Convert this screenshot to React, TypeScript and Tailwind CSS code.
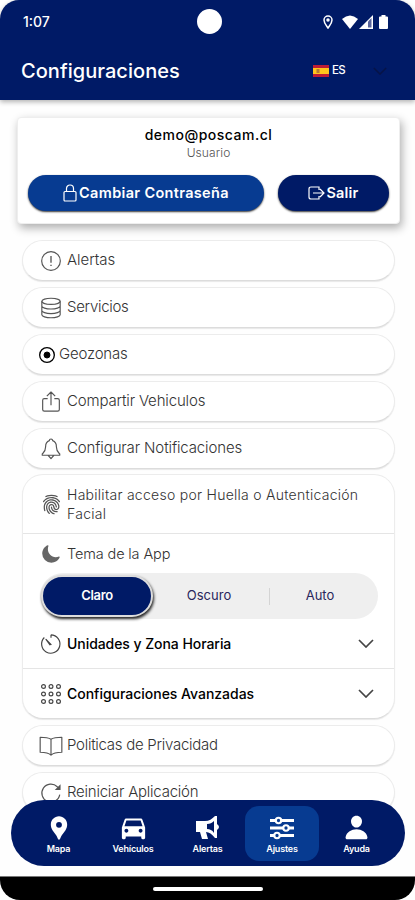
import type { ReactNode } from "react";
import { IoFingerPrint, IoMoon, IoPerson } from "react-icons/io5";
import { MdDirectionsCar, MdLocationPin } from "react-icons/md";

const paths: Record<string, ReactNode> = {
  alert: (
    <>
      <circle cx="12" cy="12" r="11.2" />
      <path d="M12 6v8M12 16.5v1.5" strokeWidth="1.6" />
    </>
  ),
  database: (
    <>
      <ellipse cx="12" cy="4" rx="11" ry="3.7" />
      <path d="M1 4v16c0 2 4.9 3.700 11 3.700s11-1.700 11-3.700V4M1 9.500c0 2 4.900 3.700 11 3.700s11-1.700 11-3.700M1 15c0 2 4.900 3.700 11 3.700s11-1.700 11-3.700" />
    </>
  ),
  target: (
    <>
      <circle cx="12" cy="12" r="11" strokeWidth="2" />
      <circle cx="12" cy="12" r="4.5" fill="currentColor" />
    </>
  ),
  share: <path d="M8 8H4q-2 0-2 2v11q0 2 2 2h16q2 0 2-2V10q0-2-2-2h-4M12 16V0M7 5l5-5 5 5" />,
  bell: <path d="M12 0c-1.500 0-2 1-2 2-3 1-4.500 4-4.500 7.500 0 5-1.500 6-4 8.500v1.500h21V18c-2.500-2.500-4-3.500-4-8.500C18.500 6 17 3 14 2c0-1-.5-2-2-2ZM8.500 19.500 12 23.500l3.500-4" />,
  timer: <path d="M12 1a11 11 0 1 1-8 3.200M12 1v3.500M12.500 13 6 6.500l5 7" />,
  book: <path d="M12 4v19M12 4C9 2 5 1.500-1 1.500v18c6 0 10 .5 13 3.500 3-3 7-3.500 13-3.500v-18C19 1.500 15 2 12 4Z" />,
  reload: (
    <>
      <path d="M22.500 14A10.800 10.800 0 1 1 19.500 4.500l2.500 3" />
      <path d="M23.500 1.500v7h-7Z" fill="currentColor" stroke="none" />
    </>
  ),
  grid: (
    <>
      {[3, 12, 21].map((y) =>
        [3, 12, 21].map((x) => <circle key={`${x}-${y}`} cx={x} cy={y} r="2.3" />)
      )}
    </>
  ),
};

function LineIcon({ name, className = "size-5" }: { name: string; className?: string }) {
  return (
    <svg
      viewBox="0 0 24 24"
      className={`shrink-0 overflow-visible ${className}`}
      fill="none"
      stroke="currentColor"
      strokeWidth="1.4"
      strokeLinejoin="round"
    >
      {paths[name]}
    </svg>
  );
}

function Chevron({ className }: { className: string }) {
  return (
    <svg viewBox="0 0 16 9" className={className} fill="none" stroke="currentColor" strokeWidth="1.7">
      <path d="m1 1 7 7 7-7" />
    </svg>
  );
}

const options = [
  { icon: "alert", label: "Alertas", text: "tracking-[-0.05px]" },
  { icon: "database", label: "Servicios", text: "tracking-[-0.3px]" },
  { icon: "target", label: "Geozonas", text: "tracking-[-0.2px]" },
  { icon: "share", label: "Compartir Vehiculos", text: "tracking-[-0.16px]" },
  { icon: "bell", label: "Configurar Notificaciones", text: "tracking-[-0.12px]" },
];

function Row({ icon, label, text }: { icon: string; label: string; text: string }) {
  const target = icon === "target";
  return (
    <div
      className={`flex h-[41px] shrink-0 items-center rounded-full border border-[#ececec] border-b-[#dcdcdc] bg-white shadow-[0_1px_1px_#e8e8e8] ${
        target ? "gap-[4px] pl-4" : "gap-[6px] pl-[18px]"
      }`}
    >
      <LineIcon name={icon} className={target ? "size-4 text-black" : "size-5 text-[#555]"} />
      <span className={`text-[15px] font-light text-[#333] ${text}`}>{label}</span>
    </div>
  );
}

function StatusBar() {
  return (
    <div className="flex h-[43px] items-center justify-between pl-[23px] pr-[26px]">
      <span className="w-[70px] text-[14px] font-medium">1:07</span>
      <span className="ml-[2px] size-[25px] rounded-full bg-white" />
      <div className="flex w-[66px] items-center">
        <svg viewBox="0 0 10 14" className="h-[14px] w-[10px]" fill="none" stroke="white" strokeWidth="1.5">
          <path d="M5 13C3 10 1 8 1 5a4 4 0 0 1 8 0c0 3-2 5-4 8Z" />
          <circle cx="5" cy="5" r="1" fill="white" />
        </svg>
        <svg viewBox="0 0 16 14" className="ml-[9px] h-[14px] w-4" fill="white">
          <path d="M0 4q8-7 16 0L8 14Z" />
        </svg>
        <svg viewBox="0 0 14 14" className="ml-px h-[14px] w-[14px]">
          <path d="M0 14 14 0v14Z" fill="white" />
          <path d="M9 6.500 12.500 3v9.500H9Z" fill="#5a659b" />
        </svg>
        <svg viewBox="0 0 9 14" className="ml-[6px] h-[14px] w-[9px]" fill="white">
          <path d="M2.500 0h4v1.500H8q1 0 1 1V13q0 1-1 1H1q-1 0-1-1V2.500q0-1 1-1h1.500Z" />
        </svg>
      </div>
    </div>
  );
}

function Header() {
  return (
    <header className="relative z-10 h-[100px] shrink-0 rounded-t-[19px] bg-[#001a66] text-white shadow-[0_2px_5px_rgba(0,0,0,0.3)]">
      <StatusBar />
      <div className="flex h-[56px] items-center pl-[21px]">
        <h1 className="w-[292px] text-[20px] font-medium tracking-[0.05px]">Configuraciones</h1>
        <svg viewBox="0 0 16 12" className="h-3 w-4">
          <path d="M0 0h16v12H0z" fill="#bd1c35" />
          <path d="M0 3h16v6H0z" fill="#ffc51b" />
          <path d="M3.500 4h3v4h-3z" fill="#b77932" />
        </svg>
        <span className="ml-[3px] w-[38px] text-[11.5px] font-medium tracking-[-0.8px]">ES</span>
        <Chevron className="ml-[3px] h-[8px] w-[14px] text-[#061347]" />
      </div>
    </header>
  );
}

function UserCard() {
  return (
    <section className="ml-[17px] mr-[15px] mt-[17px] flex h-[107px] shrink-0 flex-col items-center rounded-[4px] border border-[#eee] bg-white pt-[8px] shadow-[2px_4px_10px_rgba(0,0,0,0.32)]">
      <p className="text-[14px] leading-[18px] font-medium tracking-[0.5px] text-black">demo@poscam.cl</p>
      <p className="text-[12px] leading-[17px] font-light tracking-[0.1px] text-[#555]">Usuario</p>
      <div className="mt-[14px] flex gap-[14px] text-[14.5px] font-semibold text-white">
        <button className="flex h-9 w-[236px] items-center justify-center rounded-full bg-[#073b91] shadow-[0_1px_2px_#333]">
          <svg viewBox="0 0 14 18" className="mr-[2px] h-[18px] w-[14px]" fill="none" stroke="currentColor" strokeWidth="1.2">
            <rect x="1" y="7.5" width="12" height="9.5" rx="1" />
            <path d="M3.500 7.500V4.500a3.500 3.500 0 0 1 7 0v3" />
          </svg>
          <span className="tracking-[0.33px]">Cambiar Contraseña</span>
        </button>
        <button className="flex h-9 w-[111px] items-center justify-center rounded-full bg-[#001a66] shadow-[0_1px_2px_#333]">
          <svg viewBox="0 0 17 14" className="mr-px h-[14px] w-[17px]" fill="none" stroke="currentColor" strokeWidth="1.2">
            <path d="M11 4V1H3Q1 1 1 3v8q0 2 2 2h8v-3M5 7h11M12 3l4 4-4 4" />
          </svg>
          <span className="tracking-[0.2px]">Salir</span>
        </button>
      </div>
    </section>
  );
}

function ThemeSwitch() {
  return (
    <div className="ml-[17px] flex h-[46px] w-[338px] items-center rounded-full bg-[#efefef] text-[13px] text-[#29265c]">
      <div className="ml-px flex h-[42px] w-[112px] items-center justify-center rounded-full border-2 border-[#ddd] bg-[#001a66] font-semibold tracking-[-0.35px] text-white shadow-[1px_2px_3px_#222]">
        Claro
      </div>
      <span className="flex-1 pr-[4px] text-center">Oscuro</span>
      <span className="h-[17px] w-px bg-[#d4d4d4]" />
      <span className="w-[108px] pr-2 text-center">Auto</span>
    </div>
  );
}

function AccordionRow({ icon, label, text }: { icon: string; label: string; text: string }) {
  return (
    <div className="flex h-[49px] items-center pl-[18px] pr-5">
      <LineIcon name={icon} className="size-5 text-[#444]" />
      <span className={`ml-[6px] flex-1 text-[14px] font-medium text-black ${text}`}>{label}</span>
      <Chevron className="h-[9px] w-[16px] text-[#444]" />
    </div>
  );
}

function SettingsPanel() {
  return (
    <section className="-mt-px h-[245px] shrink-0 rounded-[21px] border border-[#ececec] border-b-[#dcdcdc] bg-white shadow-[0_1px_1px_#e8e8e8]">
      <div className="flex h-[59px] items-center gap-[6px] border-b border-[#e5e5e5] pl-[18px]">
        <IoFingerPrint className="size-[21px] shrink-0 -mr-px text-[#555]" />
        <p className="text-[14px] leading-[19px] font-light tracking-[0.27px] text-[#333]">
          Habilitar acceso por Huella o Autenticación
          <br />
          Facial
        </p>
      </div>
      <div className="flex h-[39px] items-center gap-[6px] pl-[18px]">
        <IoMoon className="size-5 text-[#666]" />
        <span className="text-[14.5px] font-light tracking-[-0.13px] text-[#333]">Tema de la App</span>
      </div>
      <ThemeSwitch />
      <div className="border-b border-[#e5e5e5]">
        <AccordionRow icon="timer" label="Unidades y Zona Horaria" text="tracking-[-0.06px]" />
      </div>
      <AccordionRow icon="grid" label="Configuraciones Avanzadas" text="tracking-[-0.02px]" />
    </section>
  );
}

const tabs = [
  { label: "Mapa", icon: <MdLocationPin className="size-[28px]" /> },
  { label: "Vehículos", icon: <MdDirectionsCar className="size-[31px]" /> },
  {
    label: "Alertas",
    icon: (
      <svg viewBox="0 0 26 24" className="h-6 w-[26px]" fill="currentColor">
        <path fillRule="evenodd" d="M22 0v8q4 3 0 6v8h-2c-3-4-6-6-9-6l2 7H7L5 16H1V5h9c4 0 7-2 10-5Zm-3 5c-2 2-4 3-7 3v5c3 0 5 1 7 4Z" />
      </svg>
    ),
  },
  {
    label: "Ajustes",
    icon: (
      <svg viewBox="0 0 24 24" className="size-6" fill="none" stroke="currentColor" strokeWidth="2.9">
        <path d="M0 4.500h5.500m6 0H24M0 12h13m6 0h5M0 19.500h4m6 0h14" />
        <g strokeWidth="2.1">
          <circle cx="8.5" cy="4.5" r="2.7" />
          <circle cx="16" cy="12" r="2.7" />
          <circle cx="7" cy="19.5" r="2.7" />
        </g>
      </svg>
    ),
  },
  { label: "Ayuda", icon: <IoPerson className="size-[27px]" /> },
];

function BottomNav() {
  return (
    <nav className="absolute bottom-[34px] left-[11px] flex h-[66px] w-[394px] items-center justify-center rounded-full bg-[#001a66] pr-px text-white">
      {tabs.map((tab) => (
        <div
          key={tab.label}
          className={`flex h-[55px] w-[74.5px] flex-col items-center rounded-[14px] ${
            tab.label === "Ajustes" ? "bg-[#073b91]" : ""
          }`}
        >
          <div className="flex h-[44px] items-center">{tab.icon}</div>
          <span className="-mt-[7px] text-[9px] leading-[12px] font-semibold tracking-[-0.2px]">{tab.label}</span>
        </div>
      ))}
    </nav>
  );
}

export default function App() {
  return (
    <div className="relative flex h-[900px] w-[415px] flex-col overflow-hidden bg-white font-['Inter','Open_Sans',sans-serif]">
      <Header />
      <main className="flex min-h-0 flex-1 flex-col overflow-hidden bg-[#fefefe]">
        <UserCard />
        <div className="ml-[22px] mr-[20px] mt-[16px] flex flex-col gap-[6px]">
          {options.map((option) => (
            <Row key={option.label} {...option} />
          ))}
          <SettingsPanel />
          <Row icon="book" label="Politicas de Privacidad" text="tracking-[-0.27px]" />
          <Row icon="reload" label="Reiniciar Aplicación" text="tracking-[-0.24px]" />
        </div>
      </main>
      <footer className="flex h-6 shrink-0 items-center justify-center rounded-b-[20px] border-t border-[#777] bg-black">
        <span className="h-1 w-[110px] rounded-full bg-white" />
      </footer>
      <BottomNav />
    </div>
  );
}
